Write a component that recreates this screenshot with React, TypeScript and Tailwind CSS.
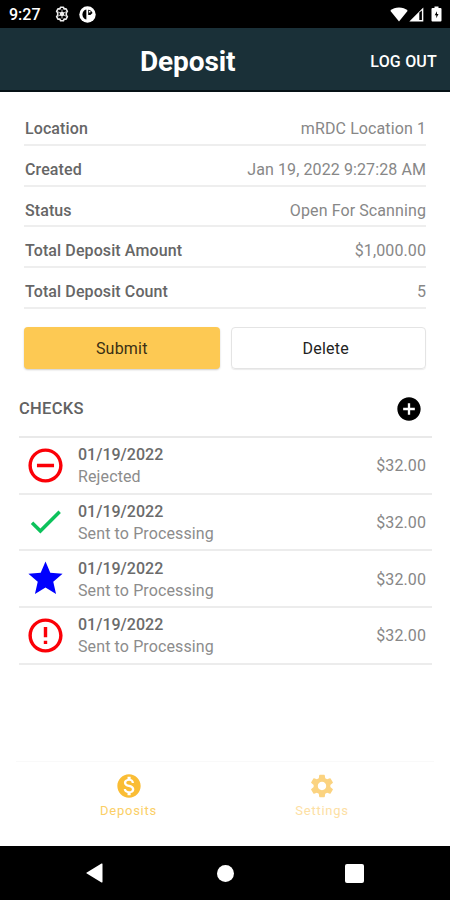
import type { ReactNode } from 'react';
import {
  MdAddCircle,
  MdCheck,
  MdErrorOutline,
  MdMonetizationOn,
  MdRemoveCircleOutline,
  MdSettings,
  MdStar,
} from 'react-icons/md';

interface Check {
  id: number;
  date: string;
  status: string;
  amount: string;
  icon: ReactNode;
}

const details = [
  { label: 'Location', value: 'mRDC Location 1' },
  { label: 'Created', value: 'Jan 19, 2022 9:27:28 AM' },
  { label: 'Status', value: 'Open For Scanning' },
  { label: 'Total Deposit Amount', value: '$1,000.00' },
  { label: 'Total Deposit Count', value: '5' },
];

const checks: Check[] = [
  { id: 1, date: '01/19/2022', status: 'Rejected', amount: '$32.00', icon: <MdRemoveCircleOutline className="text-[#fb0007]" /> },
  { id: 2, date: '01/19/2022', status: 'Sent to Processing', amount: '$32.00', icon: <MdCheck className="text-[#0cc25b]" /> },
  { id: 3, date: '01/19/2022', status: 'Sent to Processing', amount: '$32.00', icon: <MdStar className="text-[#0000fe]" /> },
  { id: 4, date: '01/19/2022', status: 'Sent to Processing', amount: '$32.00', icon: <MdErrorOutline className="text-[#fb0007]" /> },
];

function StatusBar() {
  return (
    <div className="flex h-7 items-center bg-black pl-[9px] pr-2 text-white">
      <span className="pt-px text-[16px] font-medium leading-7">9:27</span>
      <svg className="ml-[13px] h-4 w-4" viewBox="0 0 16 16" fill="none" stroke="#eeeeee">
        <path
          d="M6.500 1.300h3l.600 1.700 1.800-.300 1.500 2.600L12.300 6.700v2.600l1.100 1.400-1.500 2.600-1.800-.300-.600 1.700h-3L5.900 13l-1.800.300-1.500-2.600L3.700 9.300V6.700L2.600 5.300l1.500-2.600L5.900 3z"
          strokeWidth="1.6"
          strokeLinejoin="round"
        />
        <circle cx="8" cy="8" r="2.3" fill="#eeeeee" stroke="none" />
        <path d="M8 3.500v9M4.100 5.800l7.800 4.400M4.100 10.200l7.800-4.400" strokeWidth="0.8" />
      </svg>
      <svg className="ml-[9px] h-[17px] w-[17px]" viewBox="0 0 17 17">
        <circle cx="8.5" cy="8.5" r="8.2" fill="#fff" />
        <path d="M7.400 3.600v10C5 13.300 3.400 11 3.400 8.600S5 4 7.400 3.600z" fill="#000" />
        <path d="M9.200 3.700c2 .200 3.700 1.500 4.300 3.400L11.400 9H9.200z" fill="#000" />
        <circle cx="10.700" cy="5.700" r="0.900" fill="#fff" />
      </svg>
      <svg className="ml-auto h-[15px] w-[18px]" viewBox="0 0 18 15" fill="#fff">
        <path d="M9 14.500 0.300 3.700C2.600 1.700 5.600 0.500 9 0.500s6.400 1.200 8.700 3.200z" />
      </svg>
      <svg className="ml-px h-[15px] w-[15px]" viewBox="0 0 15 15">
        <path d="M14.300 0.500v14H0.300z" fill="#fff" />
        <path d="M10.300 5.600l2.600-2v9.500h-2.600z" fill="#000" />
      </svg>
      <svg className="ml-[7px] h-4 w-[11px]" viewBox="0 0 11 16">
        <path d="M3.500 0.500h4v1.500H9.500a1 1 0 0 1 1 1v11.500a1 1 0 0 1-1 1h-8a1 1 0 0 1-1-1V3a1 1 0 0 1 1-1h2z" fill="#fff" />
        <path d="M6 5.200 3.700 9.200h1.600v3.100l2.200-4.200H6z" fill="#000" />
      </svg>
    </div>
  );
}

function Header() {
  return (
    <header className="flex h-16 items-center justify-between border-b-2 border-[#071217] bg-[#1a3038] pl-[140px] pr-[13px] pt-[5px] text-white">
      <h1 className="text-[28px] font-bold tracking-[-0.1px]">Deposit</h1>
      <button className="text-[16px] font-medium tracking-[0.2px]">LOG OUT</button>
    </header>
  );
}

export default function App() {
  return (
    <div className="flex h-[900px] w-[450px] flex-col overflow-hidden bg-white font-['Roboto',sans-serif]">
      <StatusBar />
      <Header />

      <main className="flex-1 pt-[13px]">
        <dl className="px-6">
          {details.map((row) => (
            <div
              key={row.label}
              className="flex h-[40.75px] items-center justify-between border-b-2 border-[#eeeeee] pt-[9.5px] text-[16px] tracking-[0.1px]"
            >
              <dt className="pl-px font-medium text-[#666666]">{row.label}</dt>
              <dd className="text-[#878787]">{row.value}</dd>
            </div>
          ))}
        </dl>

        <div className="mt-[18px] grid grid-cols-2 gap-[11px] px-6 text-[16px] tracking-[0.2px]">
          <button className="h-[42px] rounded bg-[#fdc953] pt-[2px] text-[#3a2f14] shadow-[0_1px_2px_rgba(0,0,0,0.2)]">
            Submit
          </button>
          <button className="h-[42px] rounded border border-[#e4e4e4] pr-[5px] pt-[2px] text-[#222222] shadow-[0_1px_1px_rgba(0,0,0,0.08)]">
            Delete
          </button>
        </div>

        <section className="ml-[19px] mr-[18px]">
          <div className="flex h-[69px] items-center justify-between border-b-2 border-[#e9e9e9] pr-[9px] pt-[13px]">
            <h2 className="pt-[2px] text-[16.5px] font-medium tracking-[0.3px] text-[#626262]">CHECKS</h2>
            <MdAddCircle className="h-7 w-7 text-black" />
          </div>
          <ul>
            {checks.map((check) => (
              <li
                key={check.id}
                className="flex h-[56.75px] items-center border-b-2 border-[#ececec] pl-[6px] pr-[6px] text-[16px]"
              >
                <span className="text-[41px]">{check.icon}</span>
                <div className="ml-3 flex-1 pt-[2px] leading-[22px]">
                  <p className="font-medium text-[#6b6b6b]">{check.date}</p>
                  <p className="tracking-[0.12px] text-[#8c8c8c]">{check.status}</p>
                </div>
                <span className="pt-[2px] tracking-[0.1px] text-[#878787]">{check.amount}</span>
              </li>
            ))}
          </ul>
        </section>
      </main>

      <nav className="mx-4 flex h-[85px] border-t border-[#f9f9f9] pt-[10px] text-[13px] tracking-[0.75px]">
        <div className="flex w-[225px] flex-col items-center text-[#fbcf66]">
          <MdMonetizationOn className="h-7 w-7 text-[#fabd35]" />
          <span className="pt-px">Deposits</span>
        </div>
        <div className="flex w-[162px] flex-col items-center text-[#fde0a4]">
          <MdSettings className="h-7 w-7 text-[#fbd380]" />
          <span className="pt-px">Settings</span>
        </div>
      </nav>

      <div className="flex h-[54px] items-center bg-black pl-[86px]">
        <svg className="h-5 w-[17px]" viewBox="0 0 17 20" fill="#fff">
          <path d="M16.500 1v18a.600.600 0 0 1-1 .400L.800 10.600a.700.700 0 0 1 0-1.200L15.500.600a.600.600 0 0 1 1 .400z" />
        </svg>
        <span className="ml-[114px] h-[17px] w-[17px] rounded-full bg-white" />
        <span className="ml-[111px] h-[19px] w-[19px] rounded-[2px] bg-white" />
      </div>
    </div>
  );
}
